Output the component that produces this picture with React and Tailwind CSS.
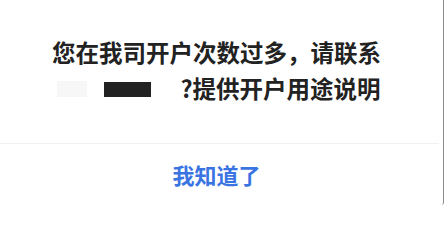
export default function App() {
  const font = { fontFamily: '"Noto Sans CJK SC", "Noto Sans", sans-serif' };
  return (
    <div className="w-[444px] h-[207px] bg-white overflow-hidden">
      <div
        className="w-[444px] h-[205px] bg-white border-r border-[#8c8c8c] rounded-br-[3px] flex flex-col"
        style={font}
      >
        <div className="h-[143px] pt-[34px] pr-[10px] flex flex-col items-center text-[23.5px] leading-[36px] font-semibold text-[#222]">
          <div>您在我司开户次数过多，请联系</div>
          <div className="flex items-center">
            <span className="inline-flex items-center w-[128px] h-[36px]">
              <span className="ml-[5px] w-[30px] h-[16px] mt-[2px] bg-[#f7f7f7]" />
              <span className="ml-[17px] w-[47px] h-[15px] mt-[2px] bg-[#222]" />
            </span>
            <span>?提供开户用途说明</span>
          </div>
        </div>
        <div className="h-px bg-[#f1f1f1] mr-[4px]" />
        <div className="flex-1 flex items-center justify-center pr-[10px] text-[22px] font-semibold text-[#3a74e2]">
          我知道了
        </div>
      </div>
    </div>
  );
}
